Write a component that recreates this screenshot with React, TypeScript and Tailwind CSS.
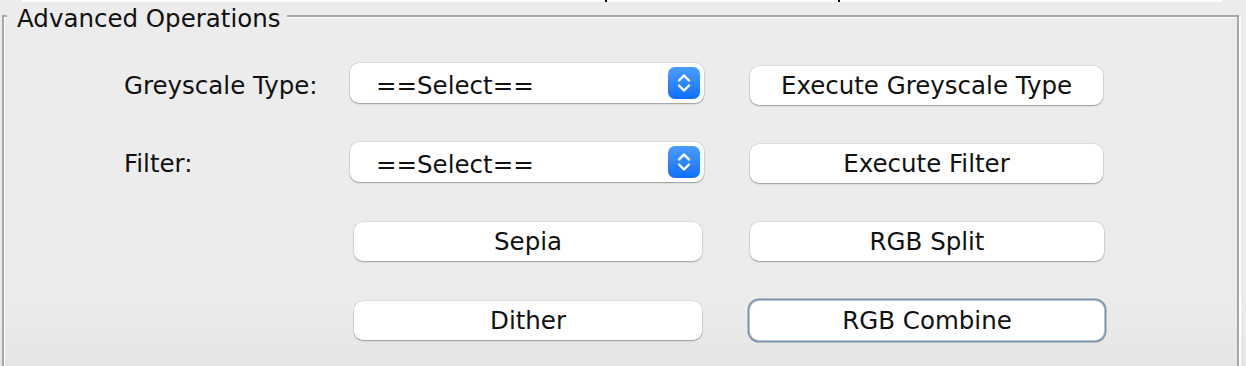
import { type ReactNode } from 'react'

const font = { fontFamily: '"DejaVu Sans", "Liberation Sans", sans-serif' }

function Stepper() {
  return (
    <div className="w-[32px] h-[32px] rounded-[7px] bg-gradient-to-b from-[#4a9dfd] to-[#0b6ffe] flex items-center justify-center">
      <svg width="16" height="22" viewBox="0 0 16 22" fill="none">
        <path d="M3 8.5 L8 3.5 L13 8.5" stroke="white" strokeWidth="2.4" strokeLinecap="round" strokeLinejoin="round" />
        <path d="M3 13.5 L8 18.5 L13 13.5" stroke="white" strokeWidth="2.4" strokeLinecap="round" strokeLinejoin="round" />
      </svg>
    </div>
  )
}

function Combo() {
  return (
    <div className="h-[40px] w-[354px] rounded-[9px] bg-white shadow-[0_1px_1.5px_rgba(0,0,0,0.3),0_0_0_0.5px_rgba(0,0,0,0.12)] flex items-center justify-between pl-[26px] pr-[4px]">
      <span className="pt-[6px]">==Select==</span>
      <Stepper />
    </div>
  )
}

function Button({ children, className = '', focused = false }: { children: ReactNode; className?: string; focused?: boolean }) {
  return (
    <button
      className={`h-[39px] rounded-[9px] bg-white flex items-center justify-center pt-[2px] ${
        focused
          ? 'shadow-[0_0_0_1px_#b7c3d3,0_0_0_2.5px_#7f93ad]'
          : 'shadow-[0_1px_1.5px_rgba(0,0,0,0.3),0_0_0_0.5px_rgba(0,0,0,0.12)]'
      } ${className}`}
    >
      {children}
    </button>
  )
}

export default function App() {
  return (
    <div
      className="w-[1246px] h-[366px] overflow-hidden bg-[linear-gradient(to_bottom,#ececec_295px,#e5e5e5_366px)] text-[24.5px] text-[#111]"
      style={font}
    >
      <div className="relative ml-[22px] w-[1200px] h-[2px] bg-white">
        <div className="absolute left-[583px] top-0 w-[2px] h-[2px] bg-black" />
        <div className="absolute left-[816px] top-0 w-[2px] h-[2px] bg-black" />
      </div>

      <div className="relative mt-[13px] ml-[2px] w-[1237px] h-[400px] border-2 border-[#a6a6a6] shadow-[inset_1px_1px_0_#fff,2px_2px_0_#fff]">
        <span className="absolute left-[3px] -top-[10px] leading-[24px] pl-[10px] pr-[6px] bg-[#ececec]">
          Advanced Operations
        </span>

        <div className="grid grid-cols-[226px_354px_46px_354px] grid-rows-[40px_40px_40px_40px] items-start gap-y-[39px] pl-[120px] pt-[46px]">
          <div className="h-[40px] flex items-center pt-[7px]">Greyscale Type:</div>
          <Combo />
          <div />
          <Button className="w-[353px] mt-[3px]">Execute Greyscale Type</Button>

          <div className="h-[40px] flex items-center pt-[5px]">Filter:</div>
          <Combo />
          <div />
          <Button className="w-[353px] mt-[2px]">Execute Filter</Button>

          <div />
          <Button className="w-[348px] ml-[4px] mt-[1px]">Sepia</Button>
          <div />
          <Button className="w-[354px] mt-[1px]">RGB Split</Button>

          <div />
          <Button className="w-[348px] ml-[4px] mt-[1px]">Dither</Button>
          <div />
          <Button focused className="w-[354px] mt-[1px]">RGB Combine</Button>
        </div>
      </div>
    </div>
  )
}
